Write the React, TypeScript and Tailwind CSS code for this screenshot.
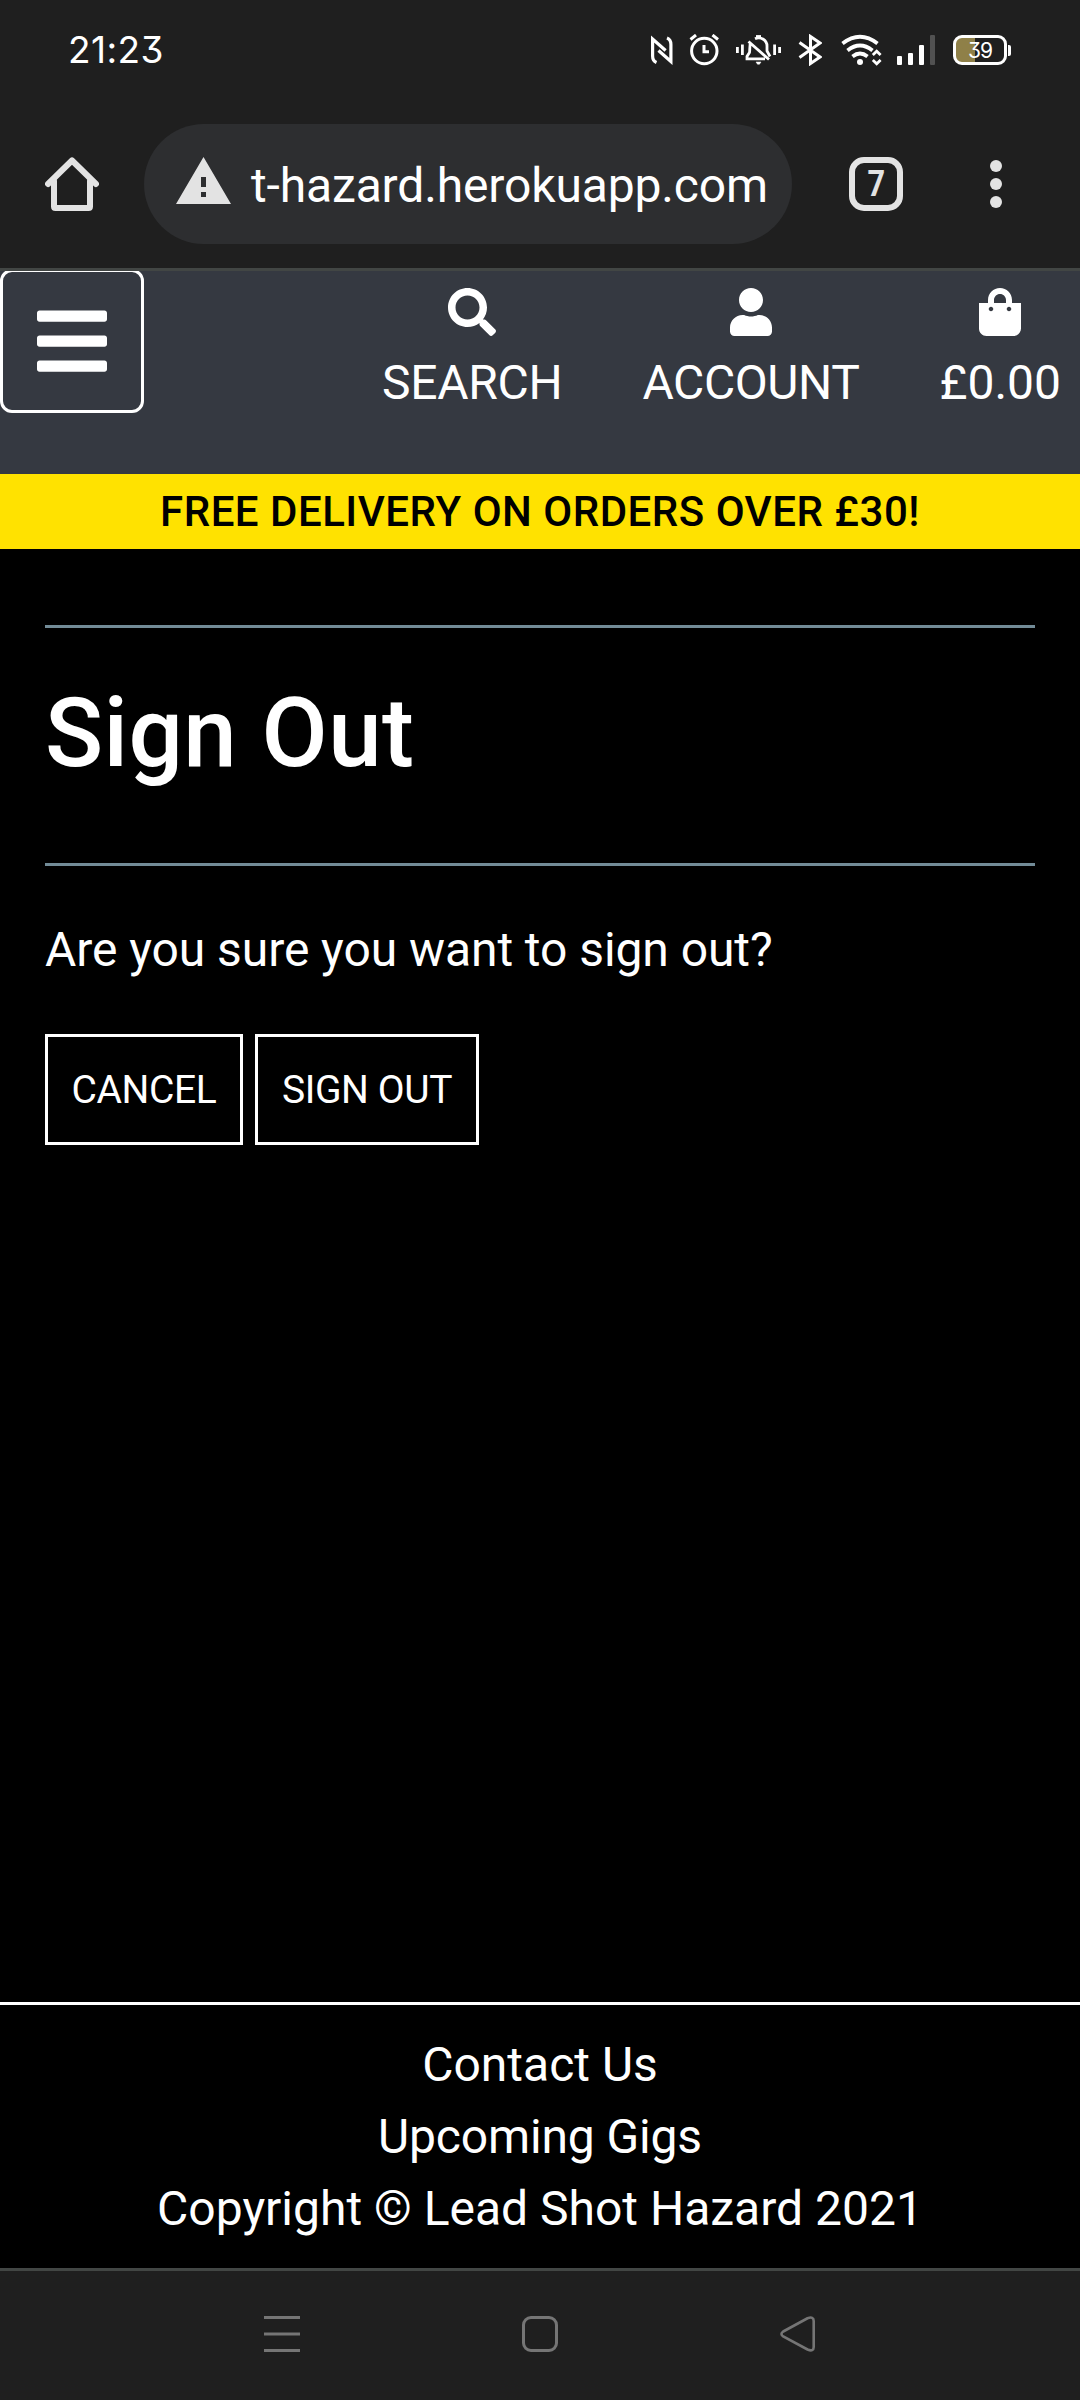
import type { ReactNode } from "react";
import { FaBars, FaSearch, FaShoppingBag, FaUser } from "react-icons/fa";

function StatusBar() {
  return (
    <div className="flex h-[100px] shrink-0 items-center justify-between pr-[69px] pl-[68px] text-white">
      <span className="mt-[-2px] font-[Inter,sans-serif] text-[37px] leading-none tracking-[0.4px] [font-feature-settings:'cv09']">
        21:23
      </span>
      <div className="flex items-center">
        {/* NFC */}
        <svg className="h-[30px] w-[22px]" viewBox="651 35 22 30" fill="none" stroke="white" strokeWidth="3.2">
          <path d="M656.5 62.5Q652.6 61 652.6 56V39l13 11.500" />
          <path d="M667 38q3.900 1.500 3.900 6.500V61.500L658.500 50.500" />
        </svg>
        {/* Alarm */}
        <svg className="ml-[16px] h-[32px] w-[31px]" viewBox="689 35 31 32" fill="none" stroke="white" strokeWidth="3">
          <circle cx="704.300" cy="52" r="12.700" />
          <path d="M704 46v6.800h5M690.500 40.500l5.500-4.500M718 40.500l-5.500-4.500" />
        </svg>
        {/* Muted bell with vibration */}
        <svg className="ml-[16px] h-[32px] w-[46px]" viewBox="736 34 46 32" fill="none" stroke="white" strokeWidth="2.800">
          <path d="M737.400 47v6M742.400 44.500v10.500M774.600 44.500v10.500M779.600 47v6" />
          <path d="M750.500 42.500C749.500 45 750 50 749.500 52.500L747 56.500V58.800H765M755 38.800C761 36 767 40.500 767 46V51L770 56.500M748.500 41.500L769 59.500" />
          <path d="M756 36.500h5" />
          <path d="M756 62h5l-1.500 2.200h-2z" fill="white" strokeWidth="0.500" />
        </svg>
        {/* Bluetooth */}
        <svg className="ml-[16px] h-[32px] w-[24px]" viewBox="798 34 24 32" fill="none" stroke="white" strokeWidth="3">
          <path d="M799.500 42.500L820 57l-9.500 6.500V36.500L820 43l-20.500 14.500" />
        </svg>
        {/* Wi-Fi */}
        <svg className="ml-[18px] h-[32px] w-[42px]" viewBox="840 34 42 32" fill="none" stroke="white" strokeWidth="3.800">
          <path d="M842.500 43.500Q860 30 877.500 43.500M847.500 50.500Q860 40.500 872.500 50.500M852.500 56.500Q860 50.500 867.500 56.500" />
          <circle cx="860" cy="62" r="3" fill="white" stroke="none" />
          <path d="M872.800 55l3.900-3.700 3.900 3.700M872.800 60l3.900 3.700 3.900-3.700" strokeWidth="2.800" />
        </svg>
        {/* Cellular signal */}
        <div className="ml-[15px] flex h-[30px] items-end gap-[6px]">
          <i className="h-[9px] w-[5px] rounded-[1px] bg-white" />
          <i className="h-[12px] w-[5px] rounded-[1px] bg-white" />
          <i className="h-[20px] w-[5px] rounded-[1px] bg-white" />
          <i className="h-[30px] w-[5px] rounded-[1px] bg-[#515151]" />
        </div>
        {/* Battery */}
        <div className="ml-[18px] flex items-center gap-[1px]">
          <div className="flex h-[30px] w-[54px] items-center justify-center rounded-[9px] border-3 border-white bg-linear-to-r from-[#8f8048] from-40% to-transparent to-40% font-[Inter,sans-serif] text-[21px] leading-none font-normal tracking-[-1px] [font-feature-settings:'cv09']">
            39
          </div>
          <i className="h-[11px] w-[3px] rounded-r-[2px] bg-white" />
        </div>
      </div>
    </div>
  );
}

function BrowserBar() {
  return (
    <div className="flex h-[168px] shrink-0 items-center pl-[45px]">
      <svg className="h-[54px] w-[54px] text-[#e3e3e3]" viewBox="45 157 54 54" fill="none" stroke="currentColor" strokeWidth="6" strokeLinejoin="round" strokeLinecap="round">
        <path d="M48 184L72 160.500 96 184" />
        <path d="M54 181V206.500Q54 208 55.500 208H88.500Q90 208 90 206.500V181" />
      </svg>
      <div className="ml-[45px] flex h-[120px] w-[648px] items-center rounded-full bg-[#2d2e30] pl-[32px]">
        <svg className="mt-[-7px] h-[47px] w-[55px] shrink-0" viewBox="0 0 55 47">
          <path fill="#e3e3e3" fillRule="evenodd" d="M27.500 0L55 47H0zM25 20v10h5V20zM25 35v5h5v-5z" />
        </svg>
        <span className="mt-[3px] ml-[20px] text-[48px] leading-none tracking-[-0.14px] whitespace-nowrap text-white">
          t-hazard.herokuapp.com
        </span>
      </div>
      <div className="ml-[57px] flex h-[54px] w-[54px] items-center justify-center rounded-[15px] border-6 border-[#e3e3e3] text-[36px] leading-none font-bold text-[#e3e3e3]">
        <span className="scale-x-85">7</span>
      </div>
      <div className="ml-[87px] flex flex-col gap-[6px]">
        <i className="size-[12px] rounded-full bg-[#e3e3e3]" />
        <i className="size-[12px] rounded-full bg-[#e3e3e3]" />
        <i className="size-[12px] rounded-full bg-[#e3e3e3]" />
      </div>
    </div>
  );
}

function NavItem({ icon, children }: { icon: ReactNode; children: ReactNode }) {
  return (
    <a className="flex flex-col items-center text-[48px] leading-[72px] text-white">
      {icon}
      <div className="mt-[11px]">{children}</div>
    </a>
  );
}

function SiteHeader() {
  return (
    <header className="shrink-0">
      <div className="flex h-[203px] justify-between overflow-hidden bg-[#353941] pr-[19px]">
        <button className="mt-[-2px] flex h-[144px] w-[144px] items-center justify-center rounded-[12px] border-3 border-white text-white">
          <FaBars className="mt-[-1px] h-[80px] w-[70px]" />
        </button>
        <nav className="flex gap-[80px] pt-[17px]">
          <NavItem icon={<FaSearch className="size-[48px]" />}>
            <span className="tracking-[-0.3px]">SEARCH</span>
          </NavItem>
          <NavItem icon={<FaUser className="h-[48px] w-[42px]" />}>
            <span className="tracking-[-0.4px]">ACCOUNT</span>
          </NavItem>
          <NavItem icon={<FaShoppingBag className="h-[48px] w-[42px]" />}>£0.00</NavItem>
        </nav>
      </div>
      <div className="flex h-[75px] items-center justify-center bg-[#ffe200] text-[42px] leading-none font-medium tracking-[0.5px] text-black">
        FREE DELIVERY ON ORDERS OVER £30!
      </div>
    </header>
  );
}

export default function App() {
  return (
    <div className="flex h-[2400px] w-[1080px] flex-col overflow-hidden bg-[#1f1f1f] font-[Roboto,sans-serif]">
      <StatusBar />
      <BrowserBar />
      <div className="flex h-[2003px] shrink-0 flex-col border-y-3 border-[#424644] bg-black text-white">
        <SiteHeader />
        <main className="flex-1 px-[45px] pt-[76px]">
          <hr className="border-t-3 border-[#728b97]" />
          <h1 className="mt-[48px] text-[96px] leading-[115px] font-medium tracking-[0.45px]">Sign Out</h1>
          <hr className="mt-[72px] border-t-3 border-[#728b97]" />
          <p className="mt-[48px] text-[48px] leading-[72px] tracking-[-0.07px]">Are you sure you want to sign out?</p>
          <div className="mt-[48px] flex gap-[12px] text-[39px] leading-none">
            <button className="h-[111px] w-[198px] border-3 border-white pt-[2px] tracking-[-0.4px]">CANCEL</button>
            <button className="h-[111px] w-[224px] border-3 border-white pt-[2px] tracking-[-0.4px]">SIGN OUT</button>
          </div>
        </main>
        <footer className="flex h-[266px] flex-col items-center border-t-3 border-white pt-[24px] text-[48px] leading-[72px]">
          <a>Contact Us</a>
          <a className="tracking-[-0.15px]">Upcoming Gigs</a>
          <p>Copyright © Lead Shot Hazard 2021</p>
        </footer>
      </div>
      <div className="flex flex-1 items-start pt-[45px] pl-[264px]">
        <svg className="h-[36px] w-[36px]" viewBox="0 0 36 36" stroke="#757575" strokeWidth="3">
          <path d="M0 1.500H36M0 18H36M0 34.500H36" />
        </svg>
        <div className="ml-[222px] size-[36px] rounded-[9px] border-3 border-[#757575]" />
        <svg className="ml-[222px] h-[36px] w-[36px]" viewBox="0 0 36 36" fill="none" stroke="#757575" strokeWidth="2.600">
          <path d="M3.200 15.500L27.500 2.300Q33.700 0 33.700 5V31Q33.700 36 27.500 33.500L3.200 20.500Q-0.300 18 3.200 15.500Z" />
        </svg>
      </div>
    </div>
  );
}
